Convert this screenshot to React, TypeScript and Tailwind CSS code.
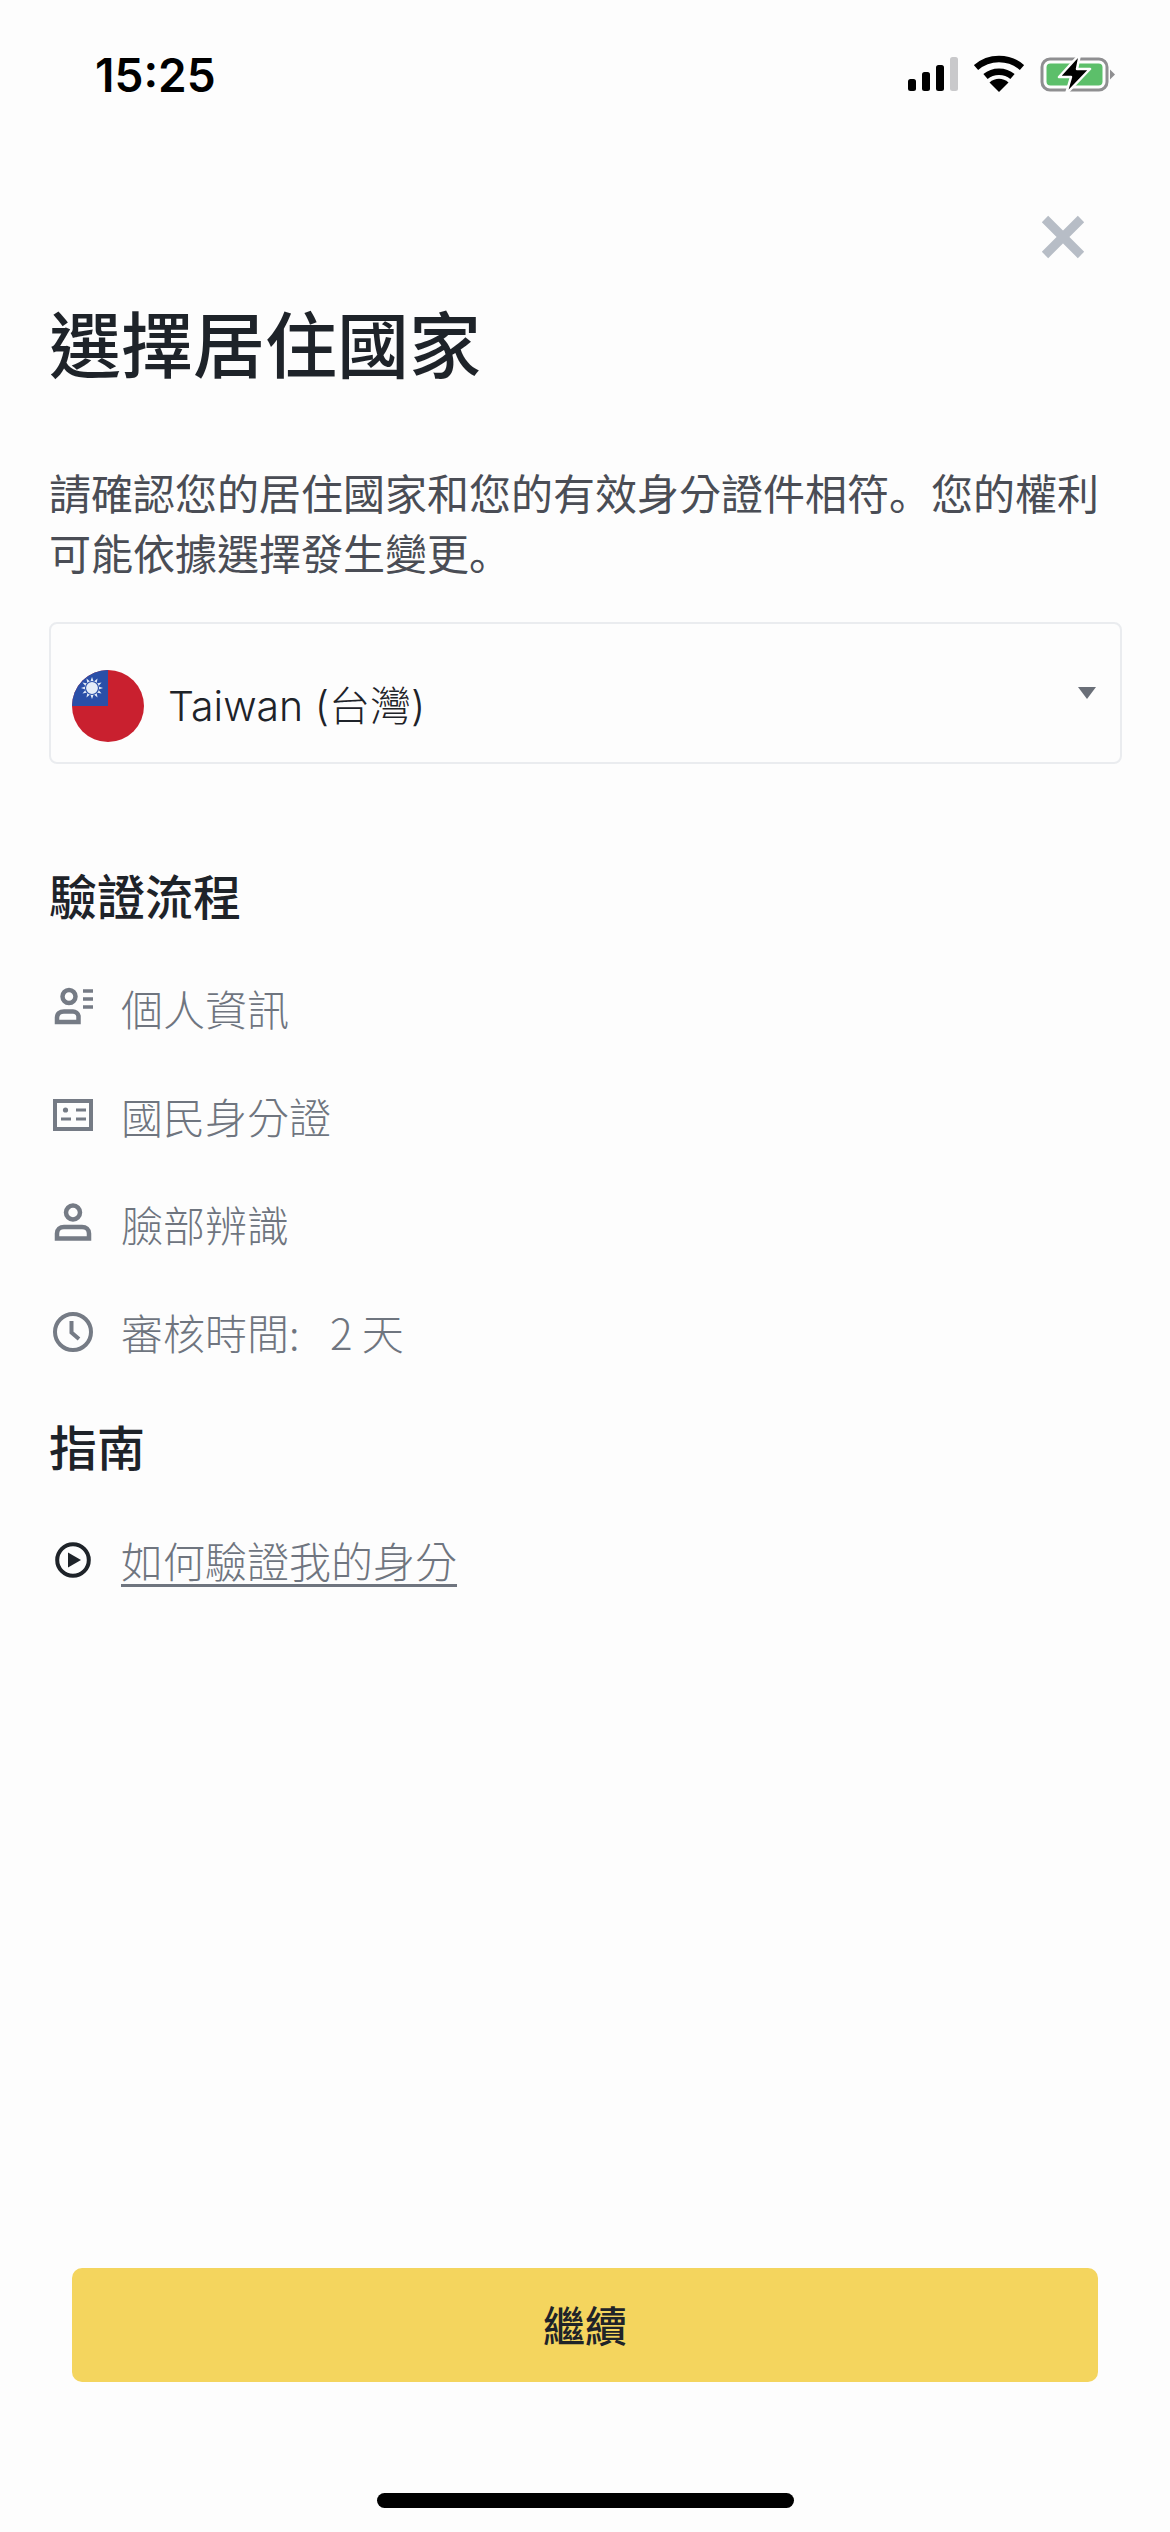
const cjk = "font-['Noto_Sans_CJK_TC','Noto_Sans',sans-serif]";
const period = "font-['Noto_Sans_CJK_SC',sans-serif]";

const SignalIcon = () => (
  <svg width="52" height="36" viewBox="0 0 52 36">
    <rect x="1" y="23" width="8" height="12" rx="2.5" fill="#000" />
    <rect x="15" y="16" width="8" height="19" rx="2.5" fill="#000" />
    <rect x="29" y="9" width="8" height="26" rx="2.5" fill="#000" />
    <rect x="43" y="1" width="8" height="34" rx="2.5" fill="#c9c9cb" />
  </svg>
);

const WifiIcon = () => (
  <svg width="50" height="38" viewBox="0 0 50 38">
    <path d="M2 12.5C15 1 35 1 48 12.5" fill="none" stroke="#000" strokeWidth="6.5" />
    <path d="M11.5 21.5C19 15 31 15 38.5 21.5" fill="none" stroke="#000" strokeWidth="6.5" />
    <path d="M15.5 27.5C21 22.5 29 22.5 34.5 27.5L25 37Z" fill="#000" />
  </svg>
);

const BatteryIcon = () => (
  <svg width="76" height="40" viewBox="0 0 76 40">
    <rect x="2" y="5" width="65" height="31" rx="8" fill="none" stroke="#8f8f91" strokeWidth="3" />
    <rect x="6.5" y="9.5" width="56" height="22" rx="4" fill="#5cbf6a" />
    <path d="M70 15.5L75 20.5L70 25.5Z" fill="#8f8f91" />
    <path d="M40 0L19 23H31L26 40L50 15H37Z" fill="#000" stroke="#fdfdfd" strokeWidth="2.5" strokeLinejoin="round" />
  </svg>
);

const CloseIcon = () => (
  <svg width="46" height="46" viewBox="0 0 46 46">
    <path d="M5 5L41 41M41 5L5 41" stroke="#b7bdc6" strokeWidth="9" />
  </svg>
);

const sunRays = [0, 30, 60, 90, 120, 150, 180, 210, 240, 270, 300, 330];

const TaiwanFlag = () => (
  <svg width="72" height="72" viewBox="0 0 72 72" className="shrink-0">
    <circle cx="36" cy="36" r="36" fill="#c9202f" />
    <path d="M36 0V36H0A36 36 0 0 1 36 0Z" fill="#2a4fa8" />
    <g fill="#e4ecf8">
      {sunRays.map((a) => (
        <path key={a} d="M20 7L21.8 12H18.2Z" transform={`rotate(${a} 20 18)`} />
      ))}
      <circle cx="20" cy="18" r="6.5" stroke="#2a4fa8" strokeWidth="1.2" />
    </g>
  </svg>
);

const PersonInfoIcon = () => (
  <svg width="48" height="48" viewBox="0 0 48 48" fill="none" stroke="#757b85" strokeWidth="4.5">
    <circle cx="20" cy="12.5" r="6.5" />
    <path d="M8 38V34C8 29.5 11 27.5 15 27.5H24C26.5 27.5 29 29.5 29.5 32V38Z" />
    <path d="M34 7H44M34 15H44M34 23H44" strokeWidth="3.5" />
  </svg>
);

const IdCardIcon = () => (
  <svg width="48" height="48" viewBox="0 0 48 48" fill="none" stroke="#757b85">
    <rect x="6" y="9" width="36" height="28" strokeWidth="4" />
    <circle cx="16.5" cy="18" r="2.6" fill="#757b85" stroke="none" />
    <path d="M12 27H22M27 18H37M27 27H37" strokeWidth="3" />
  </svg>
);

const PersonIcon = () => (
  <svg width="48" height="48" viewBox="0 0 48 48" fill="none" stroke="#757b85" strokeWidth="4.5">
    <circle cx="24" cy="12.5" r="7" />
    <path d="M8 38.5V33.5C8 29.5 11 27 15 27H33C37 27 40 29.5 40 33.5V38.5Z" />
  </svg>
);

const ClockIcon = () => (
  <svg width="48" height="48" viewBox="0 0 48 48" fill="none" stroke="#757b85" strokeWidth="4">
    <circle cx="24" cy="24" r="18" />
    <path d="M22.5 13V24.5L30 31" />
  </svg>
);

const PlayIcon = () => (
  <svg width="48" height="48" viewBox="0 0 48 48" fill="none">
    <circle cx="24" cy="24" r="15.8" stroke="#1e2329" strokeWidth="4" />
    <path d="M19 16.5L32 24L19 31.5Z" fill="#1e2329" />
  </svg>
);

const steps = [
  { icon: <PersonInfoIcon />, label: "個人資訊" },
  { icon: <IdCardIcon />, label: "國民身分證" },
  { icon: <PersonIcon />, label: "臉部辨識" },
  { icon: <ClockIcon />, label: "審核時間:\u00a0\u00a0\u00a0\u200a2 天" },
];

export default function App() {
  return (
    <div className={`${cjk} flex h-[2532px] w-[1170px] flex-col overflow-hidden bg-[#fdfdfd] text-[#1e2329]`}>
      {/* status bar */}
      <div className="flex h-[150px] shrink-0 items-start justify-between pl-[95px] pr-[54px] pt-[52px]">
        <span className="font-['Inter',sans-serif] text-[46px] leading-[46px] font-semibold text-black">15:25</span>
        <div className="flex items-center pt-[2px]">
          <SignalIcon />
          <div className="ml-[15px] mr-[16px]">
            <WifiIcon />
          </div>
          <BatteryIcon />
        </div>
      </div>

      <div className="flex justify-end pr-[84px] pt-[64px]">
        <CloseIcon />
      </div>

      <div className="flex flex-1 flex-col pl-[49px] pr-[48px]">
        <h1 className="mt-[35px] text-[72px] leading-[92px] font-medium">選擇居住國家</h1>
        <div className="mt-[75px] text-[42px] leading-[60px] text-[#4a4d55]">
          <div className="flex">
            <span>請確認您的居住國家和您的有效身分證件相符</span>
            <span className={period}>。</span>
            <span>您的權利</span>
          </div>
          <div className="flex">
            <span>可能依據選擇發生變更</span>
            <span className={period}>。</span>
          </div>
        </div>

        <div className="relative mt-[40px] flex h-[142px] items-center rounded-[8px] border-2 border-[#eaecef] pl-[21px] pr-[24px]">
          <div className="flex flex-1 items-center pt-[25px]">
            <TaiwanFlag />
            <span className="ml-[24px] font-['Inter','Noto_Sans_CJK_TC',sans-serif] text-[41px] leading-[60px] font-light">Taiwan (台灣)</span>
          </div>
          <div className="h-0 w-0 border-x-[9px] border-t-[12px] border-x-transparent border-t-[#6a6f78]" />
        </div>

        <h2 className="mt-[96px] text-[48px] leading-[68px] font-medium">驗證流程</h2>

        <div className="mt-[50px] flex flex-col gap-[48px]">
          {steps.map((s) => (
            <div key={s.label} className="flex h-[60px] items-center gap-[24px] text-[42px] leading-[60px] font-light text-[#6f757f]">
              {s.icon}
              <span>{s.label}</span>
            </div>
          ))}
        </div>

        <h2 className="mt-[49px] text-[48px] leading-[68px] font-medium">指南</h2>

        <div className="mt-[51px] flex h-[60px] items-center gap-[24px] text-[42px] leading-[60px] font-light text-[#6f757f]">
          <PlayIcon />
          <span className="underline decoration-[3px] underline-offset-[6px]">如何驗證我的身分</span>
        </div>
      </div>

      <div className="flex shrink-0 flex-col items-center px-[72px]">
        <button className="flex h-[114px] w-full items-center justify-center rounded-[10px] bg-[#f4d55e] pb-[3px] text-[42px] font-medium text-[#1e2329]">
          繼續
        </button>
        <div className="mb-[24px] mt-[111px] h-[15px] w-[417px] rounded-full bg-black" />
      </div>
    </div>
  );
}
